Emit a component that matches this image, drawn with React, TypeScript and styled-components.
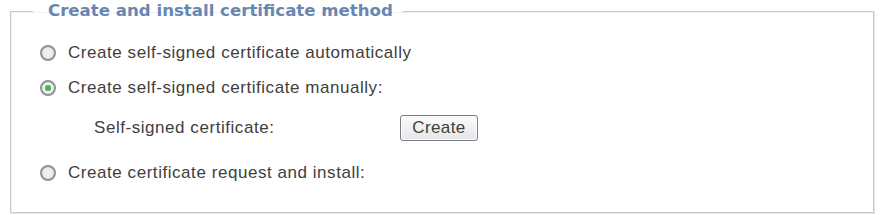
import React from 'react';
import styled, { createGlobalStyle } from 'styled-components';

const GlobalStyle = createGlobalStyle`
  html, body {
    margin: 0;
    padding: 0;
    background: #ffffff;
  }
  body {
    width: 881px;
    height: 215px;
    overflow: hidden;
  }
`;

const Page = styled.div`
  padding: 1px 7px 0 10px;
`;

const Group = styled.fieldset`
  margin: 0;
  height: 212px;
  box-sizing: border-box;
  border: 1px solid #c9c9c9;
  box-shadow: 1px 1px 0 #e6e6e6, inset 1px 1px 0 #f0f0f0;
  padding: 14px 0 0 29px;
  display: flex;
  flex-direction: column;
`;

const Legend = styled.legend`
  margin-left: -7px;
  padding: 0 10px 0 15px;
  font-family: 'DejaVu Sans', Verdana, sans-serif;
  font-weight: bold;
  font-size: 16.6px;
  line-height: 20px;
  color: #6787b2;
`;

const Row = styled.label<{ $indent?: number; $height?: number }>`
  display: flex;
  align-items: center;
  height: ${(p) => p.$height ?? 35}px;
  padding-left: ${(p) => p.$indent ?? 0}px;
  font-family: 'Liberation Sans', Arial, sans-serif;
  font-size: 17px;
  color: #404040;
  letter-spacing: 0.55px;
`;

const Radio = styled.span<{ $checked?: boolean }>`
  width: 12px;
  height: 12px;
  border-radius: 50%;
  border: 2px solid #8d9299;
  margin-right: 12px;
  flex-shrink: 0;
  background: ${(p) =>
    p.$checked
      ? 'radial-gradient(circle, #3fae4a 0, #5cc065 3px, #eef3ee 3.5px, #e4e8ea 100%)'
      : 'radial-gradient(circle, #f3f4f6 0, #dde0e4 100%)'};
`;

const Label = styled.span<{ $width?: number }>`
  width: ${(p) => (p.$width ? `${p.$width}px` : 'auto')};
`;

const Button = styled.button`
  height: 26px;
  width: 78px;
  box-sizing: border-box;
  border: 1px solid #767c88;
  border-radius: 3px;
  background: linear-gradient(#fbfbfb, #e6e6e6);
  box-shadow: inset 0 0 0 1px #ffffff;
  font-family: 'Liberation Sans', Arial, sans-serif;
  font-size: 17px;
  letter-spacing: 0.4px;
  color: #404040;
  padding: 0;
`;

export default function App() {
  return (
    <Page>
      <GlobalStyle />
      <Group>
        <Legend>Create and install certificate method</Legend>
        <Row>
          <Radio />
          Create self-signed certificate automatically
        </Row>
        <Row>
          <Radio $checked />
          Create self-signed certificate manually:
        </Row>
        <Row $indent={54} $height={46}>
          <Label $width={306}>Self-signed certificate:</Label>
          <Button>Create</Button>
        </Row>
        <Row $height={44}>
          <Radio />
          Create certificate request and install:
        </Row>
      </Group>
    </Page>
  );
}
